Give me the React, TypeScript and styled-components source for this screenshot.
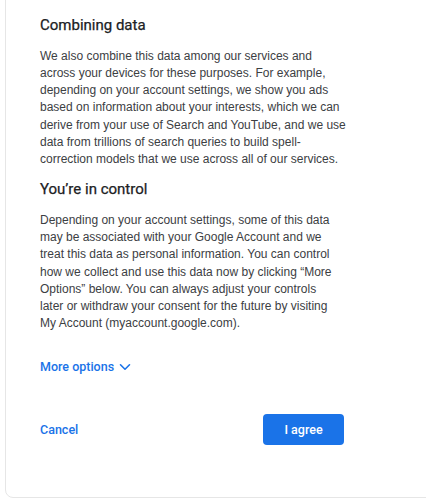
import React from "react";
import styled, { createGlobalStyle } from "styled-components";

const Global = createGlobalStyle`
  html, body { margin: 0; padding: 0; background: #ffffff; overflow: hidden; }
  body { font-family: "Liberation Sans", Arial, sans-serif; }
  * { box-sizing: border-box; }
`;

const Page = styled.div`
  width: 426px;
  height: 504px;
  overflow: hidden;
`;

const Card = styled.div`
  margin: -20px -30px 0 5px;
  padding: 34px 0 52px 34px;
  border: 1px solid #e6e6e6;
  border-radius: 8px;
  background: #ffffff;
`;

const Column = styled.div`
  width: 304px;
  display: flex;
  flex-direction: column;
`;

const Heading = styled.h2<{ $top?: number }>`
  margin: ${(p) => p.$top ?? 0}px 0 13px 0;
  font-family: Roboto, "Liberation Sans", Arial, sans-serif;
  font-size: 15px;
  line-height: 20px;
  font-weight: 400;
  color: #202124;
  -webkit-text-stroke: 0.25px #202124;
`;

const Paragraph = styled.p<{ $width: number }>`
  margin: 0;
  width: ${(p) => p.$width}px;
  font-family: "Liberation Sans", Arial, sans-serif;
  font-size: 12px;
  line-height: 17.15px;
  color: #3c4043;
`;

const MoreOptions = styled.button`
  margin-top: 25px;
  align-self: flex-start;
  display: flex;
  align-items: center;
  gap: 5px;
  padding: 0;
  border: none;
  background: none;
  font-family: Roboto, "Liberation Sans", Arial, sans-serif;
  font-size: 12.5px;
  line-height: 20px;
  font-weight: 500;
  color: #1a73e8;
  cursor: pointer;
`;

const Footer = styled.div`
  margin-top: 37px;
  display: flex;
  align-items: center;
  justify-content: space-between;
`;

const TextButton = styled.button`
  padding: 0;
  border: none;
  background: none;
  font-family: Roboto, "Liberation Sans", Arial, sans-serif;
  font-size: 12.5px;
  font-weight: 500;
  color: #1a73e8;
  cursor: pointer;
`;

const PrimaryButton = styled.button`
  width: 81px;
  height: 31px;
  border: none;
  border-radius: 4px;
  background: #1a73e8;
  color: #ffffff;
  font-family: Roboto, "Liberation Sans", Arial, sans-serif;
  font-size: 12.5px;
  font-weight: 500;
  cursor: pointer;
`;

const Chevron = () => (
  <svg width="12" height="12" viewBox="0 0 12 12" fill="none">
    <path d="M1.5 3.8 L6 8.2 L10.5 3.8" stroke="#1a73e8" strokeWidth="1.6" strokeLinecap="round" strokeLinejoin="round" />
  </svg>
);

export default function App() {
  return (
    <Page>
      <Global />
      <Card>
        <Column>
          <Heading>Combining data</Heading>
          <Paragraph $width={306}>
            We also combine this data among our services and across your devices for these purposes. For example,
            depending on your account settings, we show you ads based on information about your interests, which we can
            derive from your use of Search and YouTube, and we use data from trillions of search queries to build spell-correction
            models that we use across all of our services.
          </Paragraph>
          <Heading $top={11}>You’re in control</Heading>
          <Paragraph $width={301}>
            Depending on your account settings, some of this data may be associated with your Google Account and we
            treat this data as personal information. You can control how we collect and use this data now by clicking
            “More Options” below. You can always adjust your controls later or withdraw your consent for the future by
            visiting My Account (myaccount.google.com).
          </Paragraph>
          <MoreOptions>
            More options <Chevron />
          </MoreOptions>
          <Footer>
            <TextButton>Cancel</TextButton>
            <PrimaryButton>I agree</PrimaryButton>
          </Footer>
        </Column>
      </Card>
    </Page>
  );
}
